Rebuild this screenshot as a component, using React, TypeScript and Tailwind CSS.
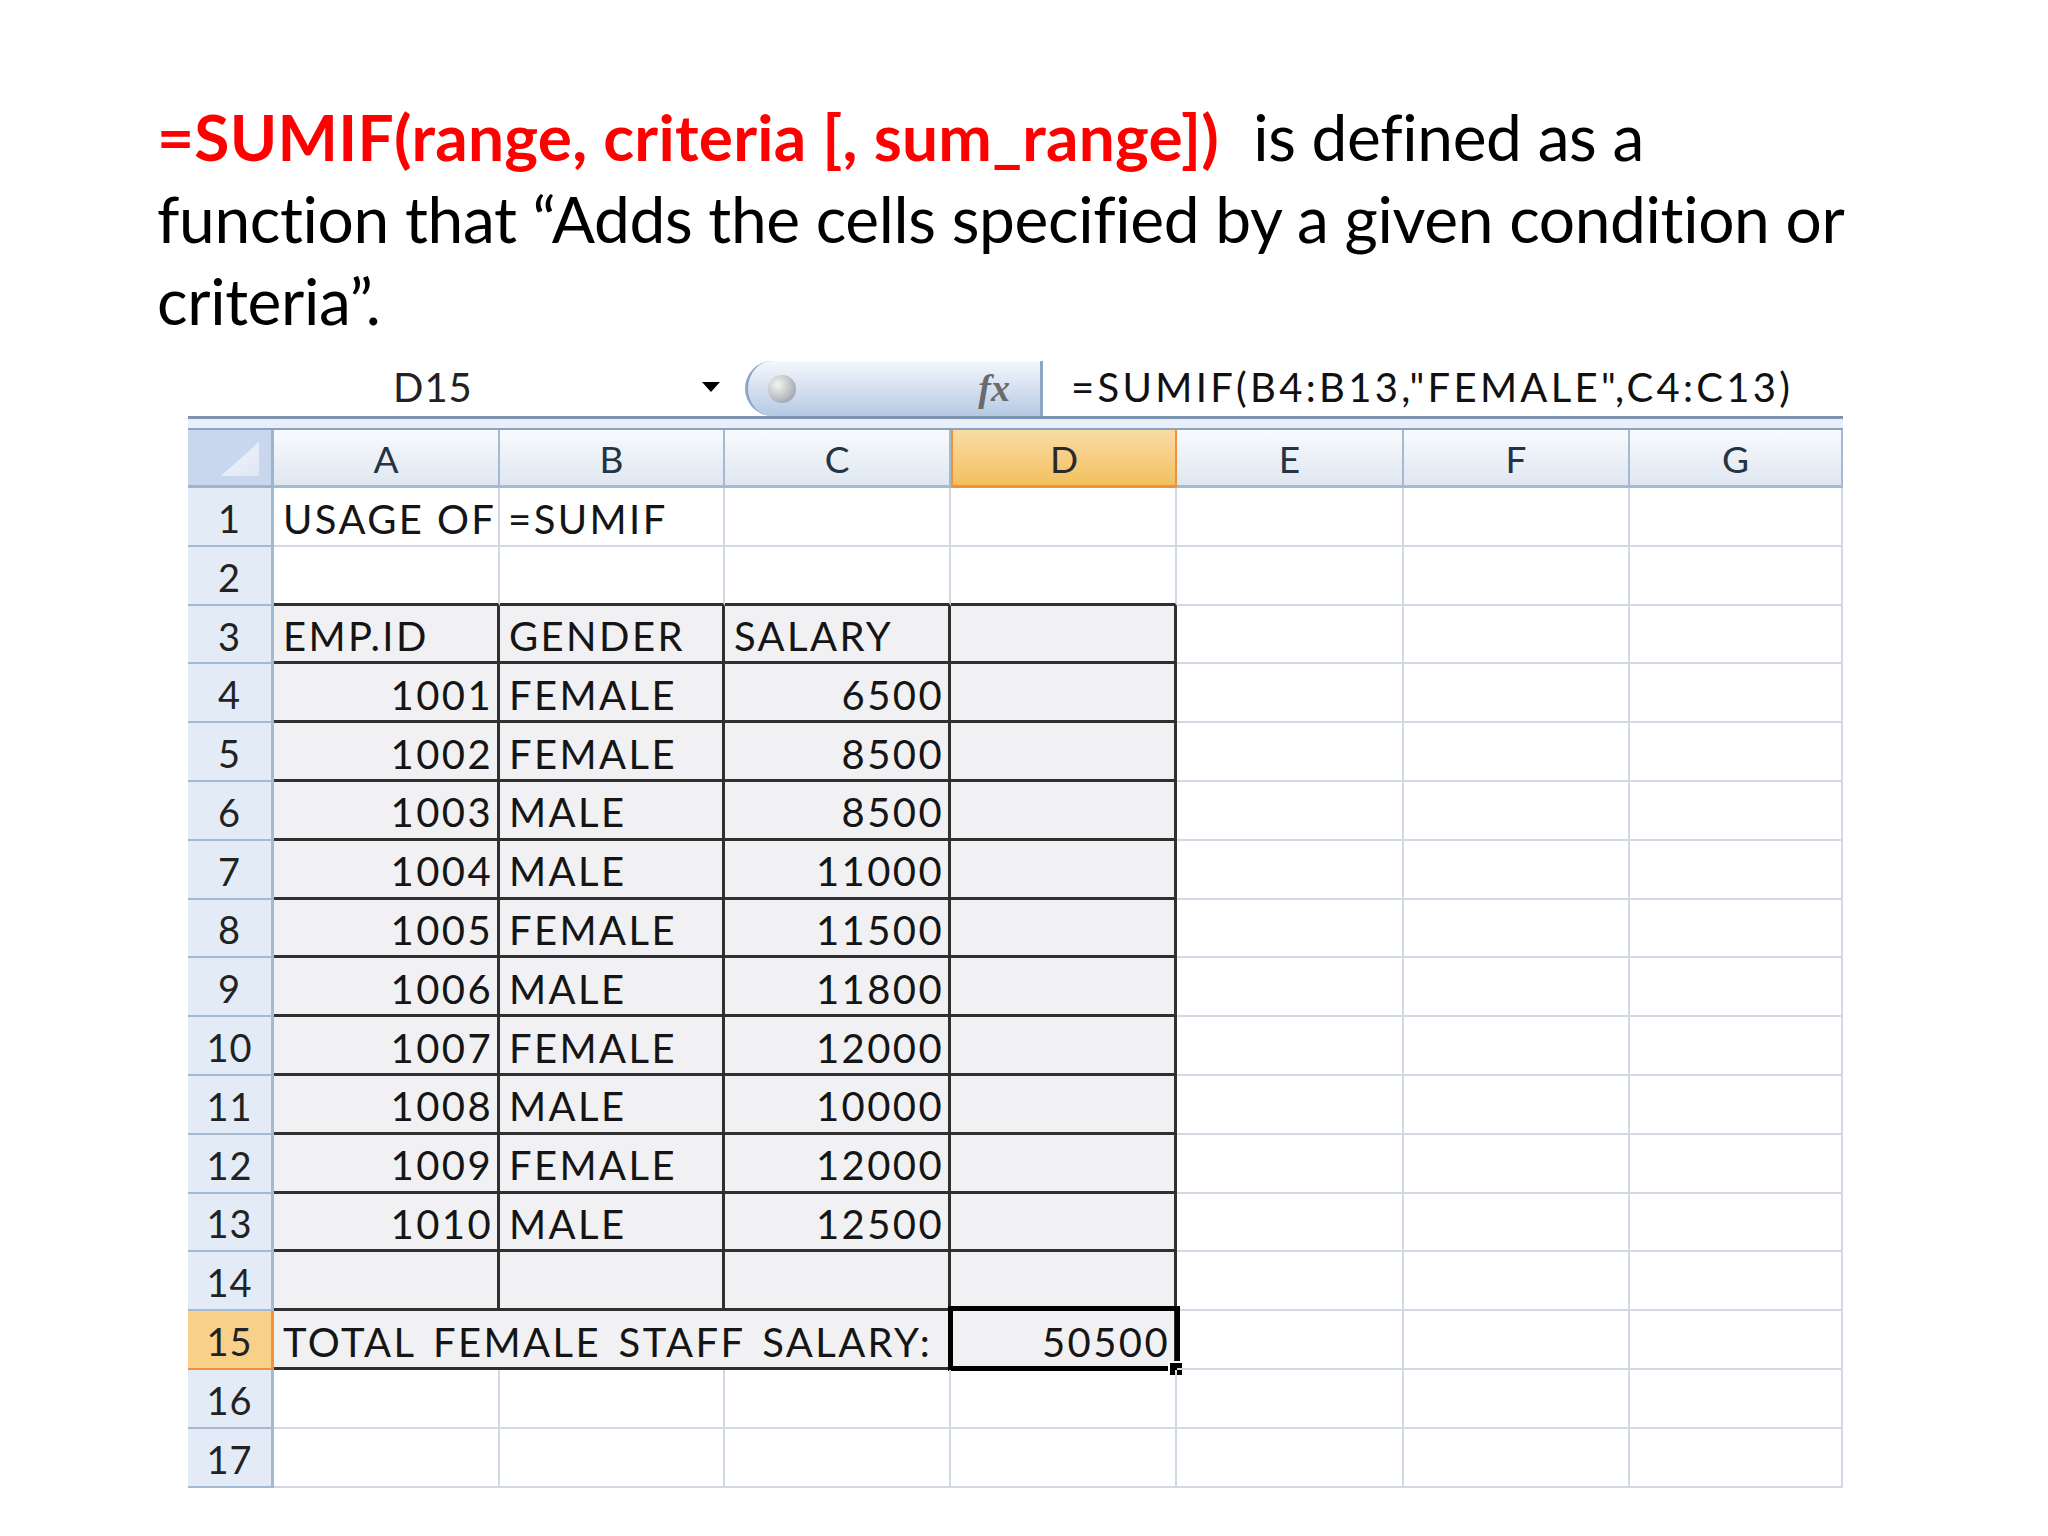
import React from 'react'

type Cell = { text?: string; align?: 'l' | 'r' }

const COLS = ['A', 'B', 'C', 'D', 'E', 'F', 'G']

const data: [string, string, string][] = [
  ['1001', 'FEMALE', '6500'],
  ['1002', 'FEMALE', '8500'],
  ['1003', 'MALE', '8500'],
  ['1004', 'MALE', '11000'],
  ['1005', 'FEMALE', '11500'],
  ['1006', 'MALE', '11800'],
  ['1007', 'FEMALE', '12000'],
  ['1008', 'MALE', '10000'],
  ['1009', 'FEMALE', '12000'],
  ['1010', 'MALE', '12500'],
]

// build the 17 visible rows, 7 columns each
function buildRows(): Cell[][] {
  const rows: Cell[][] = []
  for (let r = 1; r <= 17; r++) {
    const row: Cell[] = COLS.map(() => ({}))
    if (r === 1) row[0] = { text: 'USAGE OF =SUMIF', align: 'l' }
    if (r === 3) {
      row[0] = { text: 'EMP.ID', align: 'l' }
      row[1] = { text: 'GENDER', align: 'l' }
      row[2] = { text: 'SALARY', align: 'l' }
    }
    if (r >= 4 && r <= 13) {
      const [id, g, s] = data[r - 4]
      row[0] = { text: id, align: 'r' }
      row[1] = { text: g, align: 'l' }
      row[2] = { text: s, align: 'r' }
    }
    if (r === 15) {
      row[0] = { text: 'TOTAL FEMALE STAFF SALARY:', align: 'l' }
      row[3] = { text: '50500', align: 'r' }
    }
    rows.push(row)
  }
  return rows
}

function cellClass(r: number, c: number) {
  const inTable = r >= 3 && r <= 15 && c <= 3
  if (r === 15 && c <= 2) return 'bg-[#f1f1f3] border-b-[3px] border-b-[#303030]'
  if (inTable) return 'bg-[#f1f1f3] border-r-[3px] border-b-[3px] border-[#303030]'
  if (r === 2 && c <= 3) return 'border-r-2 border-r-[#d3d9e4] border-b-[3px] border-b-[#303030]'
  return 'border-r-2 border-b-2 border-[#d3d9e4]'
}

export default function App() {
  const rows = buildRows()

  return (
    <div className="w-[2048px] h-[1536px] bg-white overflow-hidden" style={{ fontFamily: 'Lato, "Open Sans", sans-serif' }}>
      {/* Title */}
      <div className="pt-[96px] pl-[157px] text-[64px] leading-[82px] tracking-[-0.35px] text-black whitespace-nowrap">
        <div>
          <span className="font-bold text-[#ff0000] tracking-[0.25px]">=SUMIF(range, criteria [, sum_range])</span>
          <span className="ml-[34px]">is defined as a</span>
        </div>
        <div>function that “Adds the cells specified by a given condition or</div>
        <div>criteria”.</div>
      </div>

      {/* Spreadsheet */}
      <div className="ml-[188px] mt-[16px] w-[1655px] text-[40px] text-[#151515]">
        {/* formula bar */}
        <div className="flex h-[58px] items-center">
          <div className="w-[557px] flex items-center pl-[205px] pr-[25px]">
            <span className="text-[#222] tracking-[1px]">D15</span>
            <span className="ml-auto w-0 h-0 border-l-[9px] border-r-[9px] border-t-[10px] border-l-transparent border-r-transparent border-t-black" />
          </div>
          <div className="w-[298px] h-[55px] self-end flex items-center justify-between pl-[20px] pr-[30px] rounded-l-[30px] border-l-[3px] border-r-[3px] border-[#8ea6c6] bg-linear-to-b from-[#f5f8fc] to-[#b5c9e3]">
            <span className="w-[28px] h-[28px] rounded-full bg-radial-[at_35%_35%] from-[#f4f4f4] to-[#8b9099]" />
            <span
              className="text-[38px] italic font-bold text-[#6a6a6a]"
              style={{ fontFamily: '"Liberation Serif", serif' }}
            >
              fx
            </span>
          </div>
          <div className="pl-[28px] text-[#111] tracking-[3.3px]">=SUMIF(B4:B13,"FEMALE",C4:C13)</div>
        </div>
        <div className="h-[3px] bg-[#7d93af]" />
        <div className="h-[9px] bg-[#e9eff8]" />
        <div className="h-[2px] bg-[#8ca2bd]" />

        {/* grid */}
        <div className="grid grid-cols-[86px_226px_225px_226px_226px_227px_226px_213px]">
          {/* header row */}
          <div className="h-[58px] relative bg-[#c8d7ed] border-r-[3px] border-b-[3px] border-[#9db3cf]">
            <svg className="absolute left-[33px] top-[12px]" width="38" height="34" viewBox="0 0 38 34">
              <defs>
                <linearGradient id="tri" x1="0" y1="0" x2="1" y2="1">
                  <stop offset="0" stopColor="#f6f8fc" />
                  <stop offset="1" stopColor="#dde6f3" />
                </linearGradient>
              </defs>
              <polygon points="38,0 38,34 0,34" fill="url(#tri)" />
            </svg>
          </div>
          {COLS.map((c) =>
            c === 'D' ? (
              <div
                key={c}
                className="h-[58px] flex items-center justify-center pt-[3px] text-[37px] text-[#2a2a2a] bg-linear-to-b from-[#f9dca3] to-[#f2c05d] border-b-[3px] border-[#f0923a] border-l-2 border-r-2"
              >
                {c}
              </div>
            ) : (
              <div
                key={c}
                className="h-[58px] flex items-center justify-center pt-[3px] text-[37px] text-[#253444] bg-linear-to-b from-[#f8fafd] to-[#dfe7f1] border-r-2 border-b-[3px] border-[#a4b9d2]"
              >
                {c}
              </div>
            )
          )}

          {/* body rows */}
          {rows.map((row, ri) => {
            const r = ri + 1
            return (
              <React.Fragment key={r}>
                {r === 15 ? (
                  <div className="h-[58.8px] flex items-center justify-center pt-[4px] text-[38px] tracking-[1px] text-[#222] bg-[#f8d08a] border-r-[3px] border-b-2 border-[#f0923a]">
                    {r}
                  </div>
                ) : (
                  <div className="h-[58.8px] flex items-center justify-center pt-[4px] text-[38px] tracking-[1px] text-[#222] bg-[#e3ebf6] border-r-[3px] border-b-2 border-[#a4b9d2]">
                    {r}
                  </div>
                )}
                {row.map((cell, ci) => (
                  <div
                    key={ci}
                    className={`relative h-[58.8px] flex items-center pt-[5px] whitespace-nowrap tracking-[2.4px] ${cellClass(r, ci)} ${
                      cell.align === 'r' ? 'justify-end pr-[4px]' : 'justify-start pl-[9px]'
                    } ${r === 15 && ci === 0 ? 'overflow-visible z-10 [word-spacing:5px]' : ''}`}
                  >
                    {cell.text}
                    {r === 15 && ci === 3 && (
                      <>
                        <div className="absolute -left-[3px] -top-[5px] -right-[6px] -bottom-[4px] border-[5px] border-black pointer-events-none" />
                        <div className="absolute -right-[10px] -bottom-[10px] w-[16px] h-[16px] bg-black border-2 border-white" />
                      </>
                    )}
                  </div>
                ))}
              </React.Fragment>
            )
          })}
        </div>
      </div>
    </div>
  )
}
